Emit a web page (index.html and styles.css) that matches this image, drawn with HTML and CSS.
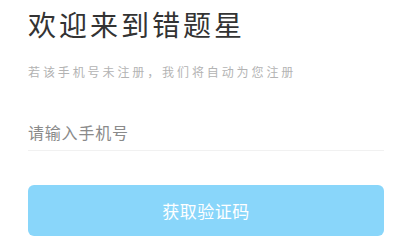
FILE: index.html
```html
<!DOCTYPE html>
<html lang="zh-CN">
<head>
  <meta charset="UTF-8">
  <title>登录 - 错题星</title>
  <meta name="viewport" content="width=device-width, initial-scale=1.0">
  <link rel="stylesheet" href="styles.css">
</head>
<body>

<div class="login">
  <h1 class="login-title">欢迎来到错题星</h1>
  <p class="login-tip">若该手机号未注册，我们将自动为您注册</p>

  <div class="field">
    <input type="tel" class="field-input" placeholder="请输入手机号" />
  </div>

  <button class="btn-code" disabled>获取验证码</button>
</div>

</body>
</html>
```

FILE: styles.css
```css
body {
  margin: 0;
  background: #fff;
  font-family: "Noto Sans CJK SC", "Noto Sans", sans-serif;
  color: #333;
}
.login {
  padding: 6px 31px 0 28px;
}
.login-title {
  margin: 0;
  font-size: 28px;
  line-height: 36px;
  font-weight: 400;
  letter-spacing: 3px;
  color: #333;
}
.login-tip {
  margin: 22px 0 0;
  font-size: 12px;
  line-height: 16px;
  letter-spacing: 2.9px;
  color: #b3b3b3;
}
.field {
  margin-top: 40px;
  padding-bottom: 6px;
  border-bottom: 1px solid #f1f1f1;
}
.field-input {
  display: block;
  width: 100%;
  box-sizing: border-box;
  border: none;
  outline: none;
  padding: 0;
  height: 24px;
  font-family: inherit;
  font-size: 16px;
  letter-spacing: 0.8px;
  color: #333;
  background: transparent;
}
.field-input::placeholder { color: #8a8a8a; }
.btn-code {
  display: block;
  width: 100%;
  height: 51px;
  margin-top: 34px;
  border: none;
  border-radius: 6px;
  background: #89d6fa;
  color: #fff;
  font-family: inherit;
  font-size: 17px;
  letter-spacing: 0.5px;
  cursor: pointer;
}
```
